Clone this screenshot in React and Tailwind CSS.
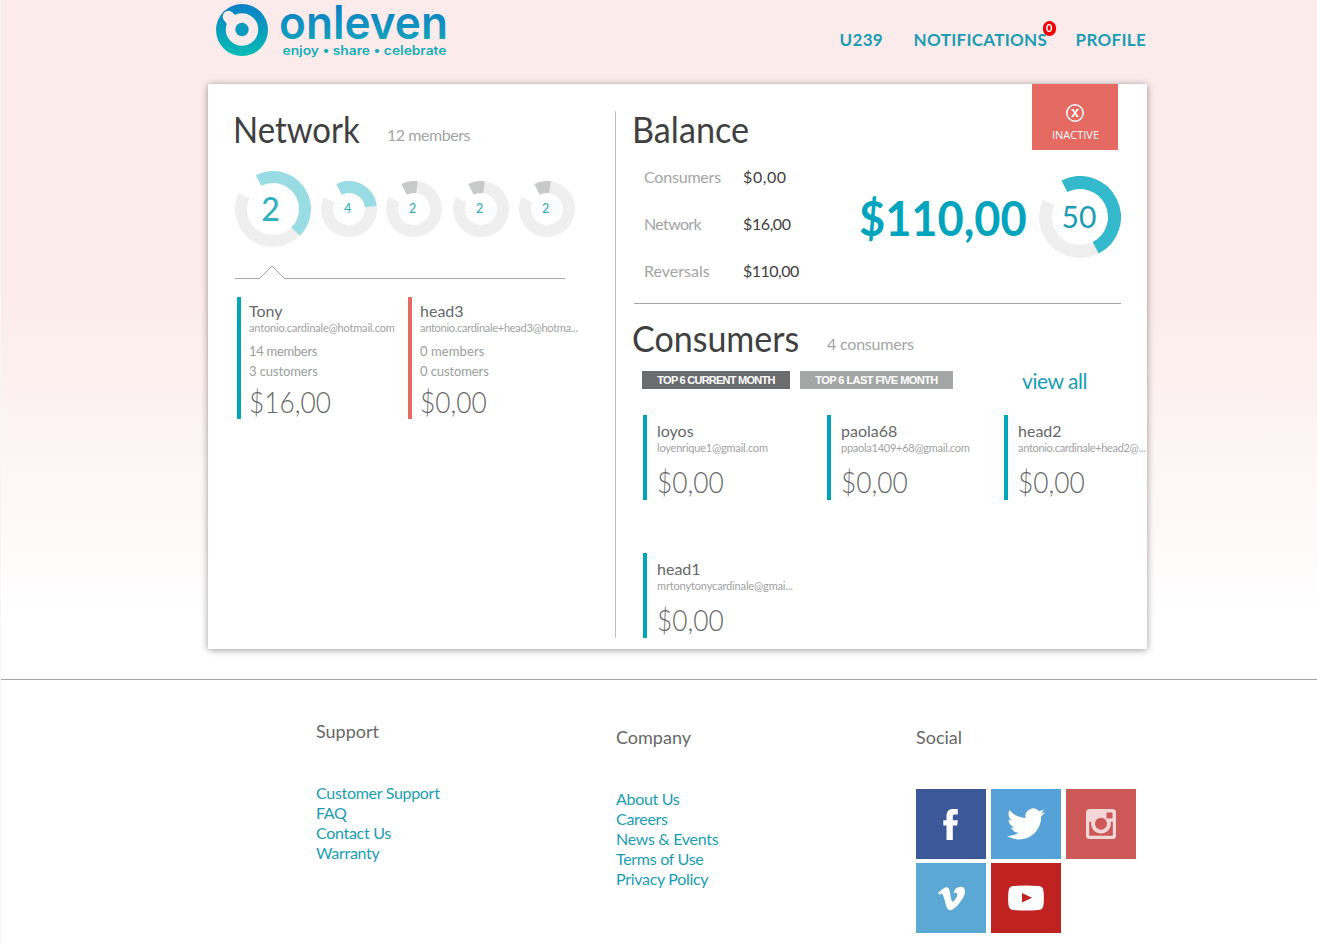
const rad = (d) => ((d - 90) * Math.PI) / 180;

function arc(c, r, a, b) {
  const x1 = c + r * Math.cos(rad(a));
  const y1 = c + r * Math.sin(rad(a));
  const x2 = c + r * Math.cos(rad(b));
  const y2 = c + r * Math.sin(rad(b));
  return `M${x1} ${y1}A${r} ${r} 0 ${b - a > 180 ? 1 : 0} 1 ${x2} ${y2}`;
}

function Donut({ size, thick, end, color, children, className = "" }) {
  const c = size / 2;
  const r = c - thick / 2;
  return (
    <div className={`grid shrink-0 place-items-center ${className}`}>
      <svg width={size} height={size} className="col-start-1 row-start-1 block" fill="none" strokeWidth={thick}>
        <path d={arc(c, r, end, 295)} stroke="#efefef" />
        <path d={arc(c, r, -27, end)} stroke={color} />
      </svg>
      {children}
    </div>
  );
}

function Logo() {
  return (
    <div className="flex pl-2 pt-1">
      <svg width="52" height="52" viewBox="0 0 52 52" className="block shrink-0">
        <defs>
          <linearGradient id="brand" x1="0" y1="0" x2="0" y2="1">
            <stop offset="0" stopColor="#0b7fc6" />
            <stop offset="1" stopColor="#06bdb4" />
          </linearGradient>
        </defs>
        <circle cx="26" cy="26" r="26" fill="url(#brand)" />
        <circle cx="26" cy="25.5" r="16.2" fill="#fcebeb" />
        <circle cx="12.5" cy="12.5" r="5.8" fill="#fcebeb" />
        <path d="M8 16l5 7 8-11-5-3z" fill="#fcebeb" />
        <circle cx="26" cy="25.5" r="6.7" fill="#0a9cbf" />
      </svg>
      <svg width="170" height="60" viewBox="0 0 170 60" className="ml-3 -mt-1 block overflow-visible font-['Inter',sans-serif]" fontWeight="700">
        <defs>
          <linearGradient id="word" gradientUnits="userSpaceOnUse" x1="0" y1="4" x2="0" y2="58">
            <stop offset="0" stopColor="#0b7fc6" />
            <stop offset="1" stopColor="#16b3b5" />
          </linearGradient>
        </defs>
        <text x="-1" y="38.800" fontSize="46" fontWeight="600" textLength="169" lengthAdjust="spacingAndGlyphs" fill="url(#word)">onleven</text>
        <text x="2.500" y="55" fontSize="12.500" fontWeight="600" textLength="164" lengthAdjust="spacingAndGlyphs" fill="url(#word)">enjoy • share • celebrate</text>
      </svg>
    </div>
  );
}

function Heading({ title, note, titleClass = "", noteClass = "" }) {
  return (
    <div className="flex h-11 items-start leading-[44px]">
      <h2 className={`shrink-0 text-[36px] whitespace-nowrap text-[#3f4041] ${titleClass}`}>
        {title}
      </h2>
      {note && <span className={`pt-[6px] text-[16px] whitespace-nowrap text-[#a3a5a5] ${noteClass}`}>{note}</span>}
    </div>
  );
}

function Member({ name, email, members, customers, amount, bar, emailClass = "", membersClass = "" }) {
  return (
    <div className={`h-[122px] w-[171px] border-l-4 pl-2 pt-1 whitespace-nowrap ${bar}`}>
      <div className="text-[16px] leading-5 text-[#666869]">{name}</div>
      <div className={`text-[11px] leading-[14px] text-[#a0a2a2] ${emailClass}`}>{email}</div>
      <div className={`mt-[6px] text-[13px] leading-5 text-[#9b9d9d] ${membersClass}`}>{members}</div>
      <div className="text-[13px] leading-5 tracking-[-0.1px] text-[#9b9d9d]">{customers}</div>
      <div className="origin-left scale-x-[0.875] text-[30px] leading-[40px] font-light text-[#666869]">{amount}</div>
    </div>
  );
}

function Consumer({ name, email, emailClass = "", width }) {
  return (
    <div className={`h-[85px] shrink-0 border-l-4 border-[#00a5b8] pl-[10px] pt-[6px] whitespace-nowrap ${width}`}>
      <div className="text-[16px] leading-5 text-[#666869]">{name}</div>
      <div className={`text-[11px] leading-[14px] text-[#a0a2a2] ${emailClass}`}>{email}</div>
      <div className="mt-[6px] origin-left scale-x-[0.875] text-[30px] leading-[40px] font-light text-[#666869]">$0,00</div>
    </div>
  );
}

function BalanceRow({ label, value, labelClass = "", valueClass = "" }) {
  return (
    <div className="flex h-[47px] items-start text-[16px] leading-5">
      <span className={`w-[99px] text-[#a3a5a5] ${labelClass}`}>{label}</span>
      <span className={`text-[#3f4041] ${valueClass}`}>{value}</span>
    </div>
  );
}

function Links({ title, items, className }) {
  return (
    <div className={`w-[300px] ${className}`}>
      <h3 className="text-[18px] leading-6 text-[#666869]">{title}</h3>
      <ul className="mt-[40px] text-[16px] leading-5 tracking-[-0.3px] text-[#1a9db3]">
        {items.map((i) => (
          <li key={i}>{i}</li>
        ))}
      </ul>
    </div>
  );
}

export default function App() {
  return (
    <div className="h-[944px] overflow-hidden border-l border-[#f6f6f6] bg-white bg-[linear-gradient(#fcebeb_0px,#fcebeb_285px,#fdf5f4_450px,#ffffff_620px)] font-['Lato',sans-serif]">
      <div className="ml-[207px] w-[939px]">
        <header className="flex h-[84px] justify-between">
          <Logo />
          <nav className="flex pt-[30px] pr-px text-[17px] leading-5 font-bold tracking-[0.3px] text-[#1a9db3]">
            <a className="w-[74px]">U239</a>
            <a className="relative w-[162px]">
              NOTIFICATIONS
              <span className="absolute -top-[9px] left-[129px] h-[15px] w-[13px] rounded-full bg-[#ee0000] text-center text-[11px] leading-[14px] tracking-normal text-white">0</span>
            </a>
            <a>PROFILE</a>
          </nav>
        </header>
        <main className="flex h-[565px] bg-white shadow-[0_1px_7px_rgba(0,0,0,0.4)]">
          <section className="w-[407px] shrink-0 pt-[23px] pl-[25px]">
            <Heading title="Network" note="12 members" titleClass="w-[154px] origin-left scale-x-[0.915]" noteClass="tracking-[-0.45px]" />
            <div className="mt-[20px] ml-[2px] flex items-center">
              <Donut size={76} thick={12} end={135} color="#9adce4">
                <span className="col-start-1 row-start-1 pr-[5px] text-[32px] leading-8 font-medium text-[#33b0c0]">2</span>
              </Donut>
              <Donut size={56} thick={12} end={84} color="#9adce4" className="ml-[10px]">
                <span className="col-start-1 row-start-1 pt-px pr-[3px] text-[12.5px] font-medium text-[#33b0c0]">4</span>
              </Donut>
              <Donut size={56} thick={12} end={8} color="#c8caca" className="ml-[9px]">
                <span className="col-start-1 row-start-1 pt-px pr-[3px] text-[12.5px] font-medium text-[#33b0c0]">2</span>
              </Donut>
              <Donut size={56} thick={12} end={8} color="#c8caca" className="ml-[11px]">
                <span className="col-start-1 row-start-1 pt-px pr-[3px] text-[12.5px] font-medium text-[#33b0c0]">2</span>
              </Donut>
              <Donut size={56} thick={12} end={8} color="#c8caca" className="ml-[10px]">
                <span className="col-start-1 row-start-1 pt-px pr-[3px] text-[12.5px] font-medium text-[#33b0c0]">2</span>
              </Donut>
            </div>
            <svg width="332" height="16" className="mt-[17px] ml-[2px] block" fill="none" stroke="#a5a7a7">
              <path d="M0 14.5H24.5L37 2L49.500 14.500H330" />
            </svg>
            <div className="mt-[17px] ml-1 flex">
              <Member name="Tony" email="antonio.cardinale@hotmail.com" members="14 members" customers="3 customers" amount="$16,00" bar="border-[#00a5b8]" emailClass="tracking-[-0.18px]" membersClass="tracking-[-0.3px]" />
              <Member name="head3" email="antonio.cardinale+head3@hotma..." members="0 members" customers="0 customers" amount="$0,00" bar="border-[#e56a62]" emailClass="tracking-[-0.28px]" membersClass="tracking-[0.1px]" />
            </div>
          </section>
          <section className="mt-[27px] h-[527px] w-[532px] border-l border-[#bfc1c1]">
            <div className="flex h-[192px]">
              <div className="w-[224px] shrink-0 pl-4">
                <div className="-mt-1">
                  <Heading title="Balance" titleClass="origin-left scale-x-[0.95]" />
                </div>
                <div className="mt-[16px] pl-3">
                  <BalanceRow label="Consumers" value="$0,00" labelClass="tracking-[-0.2px]" valueClass="tracking-[0.6px]" />
                  <BalanceRow label="Network" value="$16,00" labelClass="tracking-[-0.65px]" valueClass="tracking-[-0.4px]" />
                  <BalanceRow label="Reversals" value="$110,00" valueClass="tracking-[-0.5px]" />
                </div>
              </div>
              <div className="flex w-[307px] flex-col">
                <div className="-mt-[27px] ml-[192px] flex h-[66px] w-[86px] shrink-0 flex-col items-center bg-[#e56a62] pt-5 text-white">
                  <svg width="18" height="18" viewBox="0 0 18 18" className="block" fill="none" stroke="currentColor">
                    <circle cx="9" cy="9" r="8.200" strokeWidth="1.500" />
                    <path d="M6.500 5.500L11.500 12.500M11.500 5.500L6.500 12.500" strokeWidth="1.600" />
                    <path d="M5.300 5.500H7.800M10.200 5.500H12.700M5.300 12.500H7.800M10.200 12.500H12.700" />
                  </svg>
                  <span className="mt-[6px] pl-px text-[11px] leading-[14px] font-['Open_Sans',sans-serif]">INACTIVE</span>
                </div>
                <div className="mt-[26px] ml-[19px] flex items-center">
                  <span className="w-[180px] origin-left scale-x-[0.94] pt-0.5 text-[48px] leading-[56px] font-bold text-[#00a5bd]">$110,00</span>
                  <Donut size={82} thick={13} end={153} color="#33b9cb">
                    <span className="col-start-1 row-start-1 pr-0.5 pb-0.5 text-[30px] leading-8 text-[#1a9db3]">50</span>
                  </Donut>
                </div>
              </div>
            </div>
            <div className="ml-[18px] w-[487px] border-t border-[#a5a7a7]" />
            <div className="mt-[12px] pl-4">
              <Heading title="Consumers" note="4 consumers" titleClass="w-[195px] origin-left scale-x-[0.945]" noteClass="tracking-[-0.2px]" />
            </div>
            <div className="mt-[6px] flex items-center pl-[26px]">
              <button className="h-[18px] w-[148px] bg-[#6a6c6e] font-['Liberation_Sans',sans-serif] text-[11px] leading-[18px] font-bold tracking-[-0.75px] whitespace-nowrap text-white">TOP 6 CURRENT MONTH</button>
              <button className="ml-[10px] h-[18px] w-[153px] bg-[#a5a7a7] font-['Liberation_Sans',sans-serif] text-[11px] leading-[18px] font-bold tracking-[-0.55px] whitespace-nowrap text-white">TOP 6 LAST FIVE MONTH</button>
              <a className="ml-[69px] h-7 pt-px text-[21px] leading-[28px] tracking-[-0.45px] text-[#1a9db3]">view all</a>
            </div>
            <div className="mt-[21px] flex pl-[27px]">
              <Consumer name="loyos" email="loyenrique1@gmail.com" emailClass="tracking-[-0.2px]" width="w-[184px]" />
              <Consumer name="paola68" email="ppaola1409+68@gmail.com" emailClass="tracking-[-0.26px]" width="w-[177px]" />
              <Consumer name="head2" email="antonio.cardinale+head2@..." emailClass="tracking-[-0.32px]" width="w-[143px]" />
            </div>
            <div className="mt-[53px] flex pl-[27px]">
              <Consumer name="head1" email="mrtonytonycardinale@gmai..." emailClass="tracking-[-0.15px]" width="w-[184px]" />
            </div>
          </section>
        </main>
      </div>
      <footer className="mt-[30px] h-[264px] border-t border-[#a5a7a7] bg-white">
        <div className="flex pl-[315px]">
          <Links className="pt-[39px]" title="Support" items={["Customer Support", "FAQ", "Contact Us", "Warranty"]} />
          <Links className="pt-[45px]" title="Company" items={["About Us", "Careers", "News & Events", "Terms of Use", "Privacy Policy"]} />
          <div className="pt-[45px]">
            <h3 className="text-[18px] leading-6 text-[#666869]">Social</h3>
            <div className="mt-[40px] grid grid-cols-[70px_70px_70px] gap-x-[5px] gap-y-1">
              <div className="grid h-[70px] place-items-center bg-[#3b5998]">
                <svg width="70" height="70" className="block"><path d="M30.500 51V36.500H27.300V31.200H30.500V27.500C30.500 22.500 32.500 20 37 20H41.800V25.600H38.800C37 25.600 36.800 26.300 36.800 27.900V31.200H41.800L41.200 36.500H36.800V51Z" fill="#fff" /></svg>
              </div>
              <div className="grid h-[70px] place-items-center bg-[#55a1d8]">
                <svg width="38" height="38" viewBox="0 0 24 24" className="block" fill="#fff"><path d="M23.953 4.570a10 10 0 01-2.825.775 4.958 4.958 0 002.163-2.723c-.951.555-2.005.959-3.127 1.184a4.920 4.920 0 00-8.384 4.482C7.690 8.095 4.067 6.130 1.640 3.162a4.822 4.822 0 00-.666 2.475c0 1.710.870 3.213 2.188 4.096a4.904 4.904 0 01-2.228-.616v.060a4.923 4.923 0 003.946 4.827 4.996 4.996 0 01-2.212.085 4.936 4.936 0 004.604 3.417 9.867 9.867 0 01-6.102 2.105c-.390 0-.779-.023-1.170-.067a13.995 13.995 0 007.557 2.209c9.053 0 13.998-7.496 13.998-13.985 0-.210 0-.420-.015-.630A9.935 9.935 0 0024 4.590z" /></svg>
              </div>
              <div className="grid h-[70px] place-items-center bg-[#cd5858]">
                <svg width="30" height="30" viewBox="0 0 30 30" className="block">
                  <rect width="30" height="30" rx="3.500" fill="#f4d6d6" />
                  <g fill="#cd5858">
                    <rect x="20.500" y="3.500" width="6" height="6" rx="0.800" />
                    <path d="M3.200 12.700H5.300A9.900 9.900 0 1 0 24.700 12.700H26.800V26.700H3.200Z" />
                    <circle cx="15" cy="14.700" r="6" />
                  </g>
                </svg>
              </div>
              <div className="grid h-[70px] place-items-center bg-[#5ba8d5]">
                <svg width="27" height="27" viewBox="0 0 24 24" className="block" fill="#fff"><path d="M23.977 6.416c-.105 2.338-1.739 5.543-4.894 9.609-3.268 4.247-6.026 6.370-8.290 6.370-1.409 0-2.578-1.294-3.553-3.881L5.322 11.400C4.603 8.816 3.834 7.522 3.010 7.522c-.179 0-.806.378-1.881 1.132L0 7.197c1.185-1.044 2.351-2.084 3.501-3.128C5.080 2.701 6.266 1.984 7.055 1.910c1.867-.180 3.016 1.100 3.447 3.838.465 2.953.789 4.789.971 5.507.539 2.450 1.131 3.674 1.776 3.674.502 0 1.256-.796 2.265-2.385 1.004-1.589 1.540-2.797 1.612-3.628.144-1.371-.395-2.061-1.614-2.061-.574 0-1.167.121-1.777.391 1.186-3.868 3.434-5.757 6.762-5.637 2.473.060 3.628 1.664 3.493 4.797z" /></svg>
              </div>
              <div className="grid h-[70px] place-items-center bg-[#bf2220]">
                <svg width="36" height="26" viewBox="0 0 36 26" className="block"><path d="M6 1Q18 0 30 1Q35 1 35.500 6Q36.300 13 35.500 20Q35 25 30 25Q18 26 6 25Q1 25 .5 20Q-.3 13 .5 6Q1 1 6 1Z" fill="#fff" /><path d="M14 8L24 12.700L14 17.500Z" fill="#bf2220" /></svg>
              </div>
            </div>
          </div>
        </div>
      </footer>
    </div>
  );
}
